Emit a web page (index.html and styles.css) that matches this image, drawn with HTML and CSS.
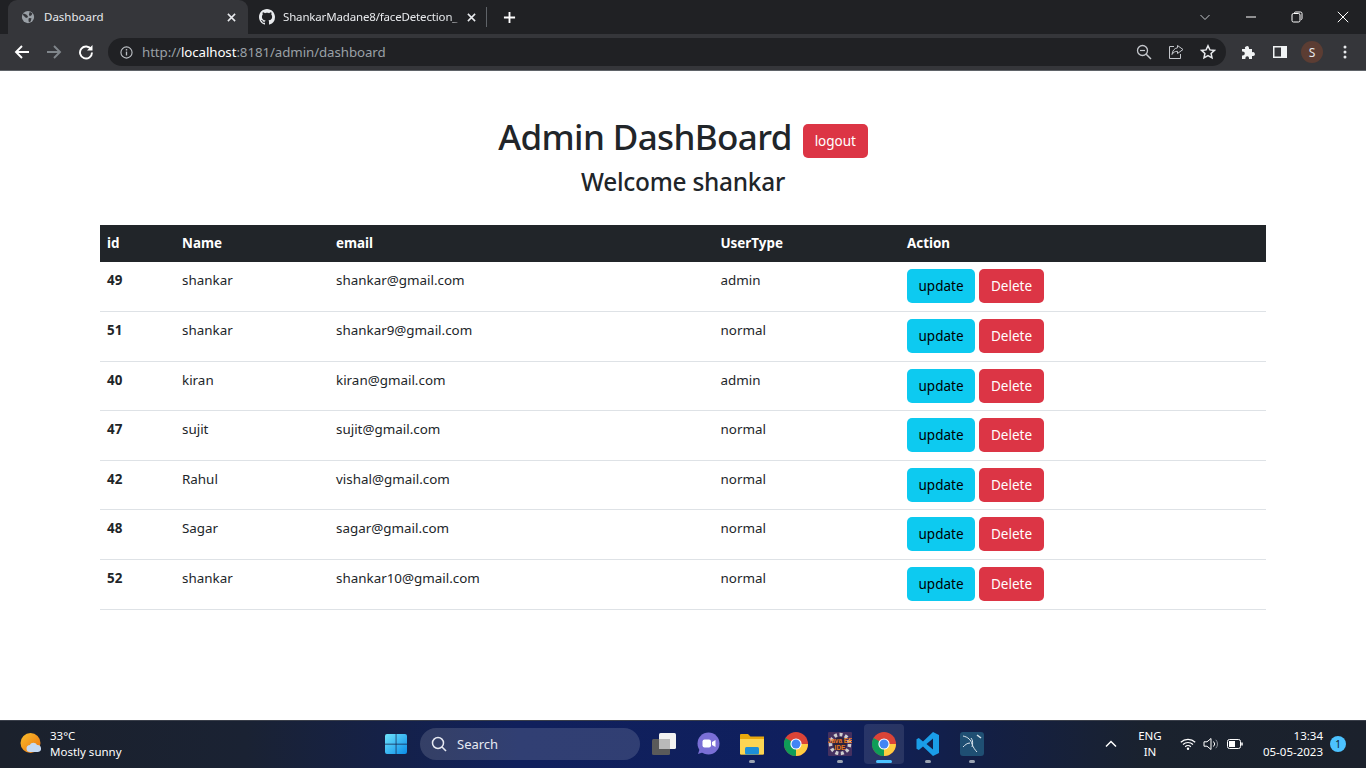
FILE: index.html
```html
<!DOCTYPE html>
<html lang="en">
<head>
<meta charset="utf-8">
<title>Dashboard</title>
<link rel="stylesheet" href="styles.css">
</head>
<body>
<div class="screen">
  <header class="browser">
    <div class="tabstrip">
      <div class="tab tab-active">
        <svg class="favicon" viewBox="0 0 16 16"><circle cx="8" cy="8" r="7" fill="#9aa0a6"/><path d="M3 4l3 1 2 2-1 2-2-.5-3-3zM10 2l3 2-1 2-2 1-1-2zM9 9l3 .5-1 3.5-2 1-.5-3z" fill="#35363a"/></svg>
        <span class="tab-title">Dashboard</span>
        <svg class="tab-close" viewBox="0 0 10 10"><path d="M1 1l8 8M9 1l-8 8" stroke="#e8eaed" stroke-width="1.7"/></svg>
      </div>
      <div class="tab tab-idle">
        <svg class="favicon-gh" viewBox="0 0 16 16"><path fill="#e8eaed" d="M8 0C3.58 0 0 3.58 0 8c0 3.54 2.29 6.53 5.47 7.59.4.07.55-.17.55-.38 0-.19-.01-.82-.01-1.49-2.01.37-2.53-.49-2.69-.94-.09-.23-.48-.94-.82-1.13-.28-.15-.68-.52-.01-.53.63-.01 1.08.58 1.23.82.72 1.21 1.87.87 2.33.66.07-.52.28-.87.51-1.07-1.78-.2-3.64-.89-3.64-3.95 0-.87.31-1.59.82-2.15-.08-.2-.36-1.02.08-2.12 0 0 .67-.21 2.2.82.64-.18 1.32-.27 2-.27s1.36.09 2 .27c1.53-1.04 2.2-.82 2.2-.82.44 1.1.16 1.92.08 2.12.51.56.82 1.27.82 2.15 0 3.07-1.87 3.75-3.65 3.95.29.25.54.73.54 1.48 0 1.07-.01 1.93-.01 2.2 0 .21.15.46.55.38A8.01 8.01 0 0 0 16 8c0-4.42-3.58-8-8-8z"/></svg>
        <span class="tab-title tab-title-clip">ShankarMadane8/faceDetection_</span>
        <svg class="tab-close" viewBox="0 0 10 10"><path d="M1 1l8 8M9 1l-8 8" stroke="#e8eaed" stroke-width="1.7"/></svg>
      </div>
      <span class="tab-sep"></span>
      <svg class="tab-new" viewBox="0 0 14 14"><path d="M7 1v12M1 7h12" stroke="#fff" stroke-width="2"/></svg>
      <div class="win-controls">
        <svg viewBox="0 0 12 12"><path d="M1.5 4l4.5 4.5L10.500 4" fill="none" stroke="#c4c7cc" stroke-width="1"/></svg>
        <svg viewBox="0 0 12 12"><path d="M1 6h10" stroke="#fff" stroke-width="1"/></svg>
        <svg viewBox="0 0 12 12"><path d="M3.500 2.500V2a1 1 0 0 1 1-1h5a1.500 1.500 0 0 1 1.500 1.500v5a1 1 0 0 1-1 1" fill="none" stroke="#fff"/><rect x="1" y="2.500" width="8" height="8.500" rx="1.500" fill="none" stroke="#fff"/></svg>
        <svg viewBox="0 0 12 12"><path d="M.8.8l10.400 10.400M11.200.8L.8 11.200" stroke="#fff" stroke-width="1"/></svg>
      </div>
    </div>
    <div class="toolbar">
      <svg class="nav-icon" viewBox="0 0 16 16"><path d="M15 8H2M8 2L2 8l6 6" fill="none" stroke="#fff" stroke-width="1.900"/></svg>
      <svg class="nav-icon" viewBox="0 0 16 16"><path d="M1 8h13M8 2l6 6-6 6" fill="none" stroke="#80868b" stroke-width="1.900"/></svg>
      <svg class="nav-icon" viewBox="0 0 16 16"><path d="M13.200 5.500A6 6 0 1 0 14 8.500" fill="none" stroke="#fff" stroke-width="1.900"/><path d="M14.500 1v5.500H9z" fill="#fff"/></svg>
      <div class="omnibox">
        <svg class="info" viewBox="0 0 14 14"><circle cx="7" cy="7" r="6" fill="none" stroke="#bdc1c6" stroke-width="1.200"/><path d="M7 6v4.200" stroke="#bdc1c6" stroke-width="1.400"/><circle cx="7" cy="4" r=".9" fill="#bdc1c6"/></svg>
        <span class="url"><span class="url-dim">http://</span><span class="url-host">localhost</span><span class="url-dim">:8181/admin/dashboard</span></span>
        <span class="omni-space"></span>
        <svg class="omni-icon" viewBox="0 0 16 16"><circle cx="6.500" cy="6.500" r="5" fill="none" stroke="#c4c7cc" stroke-width="1.300"/><path d="M10.200 10.200L15 15" stroke="#c4c7cc" stroke-width="1.500"/><path d="M4 6.500h5" stroke="#c4c7cc" stroke-width="1.200"/></svg>
        <svg class="omni-icon" viewBox="0 0 16 16"><path d="M6 2.500H1.500v12h11V10" fill="none" stroke="#c4c7cc" stroke-width="1"/><path d="M9.500 1.500L15 5.500 9.500 9.500V7.300C7 7.300 5.200 8.300 4 10.500 4.300 7 6.300 4.200 9.500 3.800z" fill="none" stroke="#c4c7cc" stroke-width="1"/></svg>
        <svg class="omni-icon" viewBox="0 0 16 16"><path d="M8 1.800l1.900 4.100 4.500.5-3.300 3 .9 4.500L8 11.700l-4 2.200.9-4.500-3.300-3 4.500-.5z" fill="none" stroke="#e8eaed" stroke-width="1.500"/></svg>
      </div>
      <svg class="tool-puzzle" viewBox="0 0 16 16"><path fill="#f1f3f4" d="M1 5h3.200a2 2 0 1 1 3.800-1V5h3v3.200a2 2 0 1 1 1 3.800h-1v3H8v-1a1.800 1.800 0 1 0-3.600 0v1H1v-3.500h.8a2 2 0 1 0 0-4H1z"/></svg>
      <svg class="tool-panel" viewBox="0 0 14 14"><path fill-rule="evenodd" fill="#f1f3f4" d="M0 1h14v12H0zM1.500 2.500v9H8v-9z"/></svg>
      <span class="avatar">S</span>
      <svg class="tool-menu" viewBox="0 0 4 14"><circle cx="2" cy="2" r="1.500" fill="#e8eaed"/><circle cx="2" cy="7" r="1.500" fill="#e8eaed"/><circle cx="2" cy="12" r="1.500" fill="#e8eaed"/></svg>
    </div>
  </header>

  <main class="page">
    <div class="heading">
      <h1>Admin DashBoard</h1>
      <a class="btn btn-danger btn-logout">logout</a>
    </div>
    <h3>Welcome shankar</h3>
    <table class="users">
      <thead>
        <tr><th class="c-id">id</th><th class="c-name">Name</th><th class="c-email">email</th><th class="c-type">UserType</th><th>Action</th></tr>
      </thead>
      <tbody>
        <tr><th>49</th><td>shankar</td><td>shankar@gmail.com</td><td>admin</td><td><a class="btn btn-info">update</a><a class="btn btn-danger">Delete</a></td></tr>
        <tr><th>51</th><td>shankar</td><td>shankar9@gmail.com</td><td>normal</td><td><a class="btn btn-info">update</a><a class="btn btn-danger">Delete</a></td></tr>
        <tr><th>40</th><td>kiran</td><td>kiran@gmail.com</td><td>admin</td><td><a class="btn btn-info">update</a><a class="btn btn-danger">Delete</a></td></tr>
        <tr><th>47</th><td>sujit</td><td>sujit@gmail.com</td><td>normal</td><td><a class="btn btn-info">update</a><a class="btn btn-danger">Delete</a></td></tr>
        <tr><th>42</th><td>Rahul</td><td>vishal@gmail.com</td><td>normal</td><td><a class="btn btn-info">update</a><a class="btn btn-danger">Delete</a></td></tr>
        <tr><th>48</th><td>Sagar</td><td>sagar@gmail.com</td><td>normal</td><td><a class="btn btn-info">update</a><a class="btn btn-danger">Delete</a></td></tr>
        <tr><th>52</th><td>shankar</td><td>shankar10@gmail.com</td><td>normal</td><td><a class="btn btn-info">update</a><a class="btn btn-danger">Delete</a></td></tr>
      </tbody>
    </table>
  </main>

  <footer class="taskbar">
    <div class="weather">
      <svg class="weather-icon" viewBox="0 0 24 24"><defs><linearGradient id="sun" x1="0" y1="0" x2="1" y2="1"><stop offset="0" stop-color="#fbbf2c"/><stop offset="1" stop-color="#e8700f"/></linearGradient></defs><circle cx="10.500" cy="11" r="10" fill="url(#sun)"/><path d="M10 20a3.500 3.500 0 0 1 0-7c.6-2.500 5.500-3.500 7 0a3.500 3.500 0 0 1 1 7z" fill="#c5d9f2"/></svg>
      <div class="weather-text"><span>33°C</span><span>Mostly sunny</span></div>
    </div>
    <div class="slot">
      <svg class="i24" viewBox="0 0 24 24"><defs><linearGradient id="win" x1="0" y1="0" x2="1" y2="1"><stop offset="0" stop-color="#6fe3fb"/><stop offset="1" stop-color="#0a8ce8"/></linearGradient></defs><path fill="url(#win)" d="M3 2h8.700v9.700H1V4a2 2 0 0 1 2-2zM12.400 2H21a2 2 0 0 1 2 2v7.700H12.400zM1 12.400h10.700V22H3a2 2 0 0 1-2-2zM12.400 12.400H23V20a2 2 0 0 1-2 2h-8.600z"/></svg>
    </div>
    <div class="search">
      <svg class="search-icon" viewBox="0 0 16 16"><circle cx="7" cy="7" r="5.500" fill="none" stroke="#e6e9f2" stroke-width="1.500"/><path d="M11 11l4 4" stroke="#e6e9f2" stroke-width="1.600"/></svg>
      <span>Search</span>
    </div>
    <div class="slot">
      <svg class="i24" viewBox="0 0 24 24"><rect x="7" y="1" width="17" height="16" rx="1.500" fill="#f2f2f2"/><rect x="0" y="7" width="18" height="16" rx="1.500" fill="#5a5a5a"/><rect x="7" y="7" width="11" height="10" fill="#b9b9b9"/></svg>
    </div>
    <div class="slot">
      <svg class="i24" viewBox="0 0 24 24"><circle cx="12.500" cy="11.500" r="11" fill="#7a6fd6"/><path d="M2 22l2-6 4 4z" fill="#7a6fd6"/><rect x="6.500" y="7.500" width="8.500" height="8" rx="2" fill="#fff"/><path d="M16 10l3.500-2v7L16 13z" fill="#fff"/></svg>
    </div>
    <div class="slot slot-open">
      <svg class="i24" viewBox="0 0 24 24"><path d="M0 3a1 1 0 0 1 1-1h7l2.500 2.500H24v17a1 1 0 0 1-1 1H1a1 1 0 0 1-1-1z" fill="#e9a80c"/><path d="M0 7h24v14.500a1 1 0 0 1-1 1H1a1 1 0 0 1-1-1z" fill="#fcd553"/><rect x="5" y="15" width="14" height="7.500" rx="1.500" fill="#1d8fd8"/></svg>
    </div>
    <div class="slot">
      <svg class="i24" viewBox="0 0 24 24"><use href="#chrome"/></svg>
    </div>
    <div class="slot slot-open">
      <svg class="i24" viewBox="0 0 24 24"><rect width="24" height="24" rx="1" fill="#453060"/><circle cx="12" cy="12" r="9.500" fill="none" stroke="#cfcfcf" stroke-width="3.500" stroke-dasharray="3 2.500"/><circle cx="12" cy="12" r="7" fill="#2c2340"/><text x="12" y="11" class="java-text">Java EE</text><text x="12" y="18" class="java-text">IDE</text></svg>
    </div>
    <div class="slot slot-current">
      <svg class="i24" viewBox="0 0 24 24"><defs><g id="chrome"><circle cx="12" cy="12" r="12" fill="#db4437"/><path d="M12 12L1.600 6A12 12 0 0 0 12 24l6-10.500z" fill="#0f9d58"/><path d="M12 12h12A12 12 0 0 1 12 24z" fill="#ffcd40"/><circle cx="12" cy="12" r="5.600" fill="#fff"/><circle cx="12" cy="12" r="4.500" fill="#4285f4"/></g></defs><use href="#chrome"/></svg>
    </div>
    <div class="slot slot-open">
      <svg class="i24" viewBox="0 0 24 24"><path d="M17 0l6 3v18l-6 3L7 14.500 2.800 18 .5 16.800V7.200L2.800 6 7 9.500zM17 6.500L10.500 12l6.500 5.500z" fill="#1a9de8" fill-rule="evenodd"/></svg>
    </div>
    <div class="slot slot-open">
      <svg class="i24" viewBox="0 0 24 24"><rect width="24" height="24" rx="3" fill="#1f4f73"/><path d="M3 4c5 1 8 4 9 8 1 3 3 6 5 8M11 6c2 2 2 6 1 9M3 15c2-2 4-4 7-4" fill="none" stroke="#dbe6ee" stroke-width="1"/><path d="M17 3l4 3" stroke="#dbe6ee" stroke-width="1.500"/></svg>
    </div>
    <div class="tray">
      <svg class="tray-up" viewBox="0 0 12 8"><path d="M1 6.500L6 1.500l5 5" fill="none" stroke="#fff" stroke-width="1.500"/></svg>
      <div class="lang"><span>ENG</span><span>IN</span></div>
      <svg class="tray-wifi" viewBox="0 0 16 12"><path d="M.8 4.200a10.500 10.500 0 0 1 14.400 0M3 6.500a7.300 7.300 0 0 1 10 0M5.200 8.700a4 4 0 0 1 5.600 0" fill="none" stroke="#fff" stroke-width="1.200"/><circle cx="8" cy="10.700" r="1.200" fill="#fff"/></svg>
      <svg class="tray-vol" viewBox="0 0 16 14"><path d="M1 4.800h3L8 1.500v11l-4-3.300H1z" fill="none" stroke="#fff" stroke-width="1"/><path d="M10.500 4.500a3.500 3.500 0 0 1 0 5" fill="none" stroke="#fff"/><path d="M12.800 2.800a6 6 0 0 1 0 8.400" fill="none" stroke="#8a8f98"/></svg>
      <svg class="tray-bat" viewBox="0 0 16 10"><rect x=".5" y=".5" width="13" height="9" rx="2" fill="none" stroke="#fff"/><rect x="2" y="2" width="6" height="6" fill="#fff"/><path d="M15 3.500v3" stroke="#fff" stroke-width="1.500"/></svg>
      <div class="clock"><span>13:34</span><span>05-05-2023</span></div>
      <span class="badge">1</span>
    </div>
  </footer>
</div>
</body>
</html>
```

FILE: styles.css
```css
* { box-sizing: border-box; }
html, body { margin: 0; padding: 0; height: 100%; overflow: hidden; }
body { font-family: "Noto Sans", "Open Sans", sans-serif; color: #212529; background: #fff; }
.screen { display: flex; flex-direction: column; width: 1366px; height: 768px; }

/* browser chrome */
.browser { flex: none; height: 71px; background: #202124; border-bottom: 1px solid #5f6368; }
.tabstrip { display: flex; align-items: center; height: 34px; padding: 0 0 0 8px; color: #e8eaed; font-size: 11.500px; }
.tab { display: flex; align-items: center; height: 34px; }
.tab-active { width: 240px; padding: 0 12px 0 13px; background: #35363a; border-radius: 9px 9px 0 0; }
.tab-idle { width: 233px; padding: 0 5px 0 11px; }
.favicon { width: 14px; height: 14px; flex: none; margin-right: 9px; }
.favicon-gh { width: 16px; height: 16px; flex: none; margin-right: 8px; }
.tab-title { flex: 1; white-space: nowrap; overflow: hidden; padding-bottom: 1px; }
.tab-title-clip { margin-right: 7px; letter-spacing: -.16px; -webkit-mask-image: linear-gradient(90deg, #000 94%, rgba(0, 0, 0, .3)); mask-image: linear-gradient(90deg, #000 94%, rgba(0, 0, 0, .3)); }
.tab-close { width: 9px; height: 9px; flex: none; }
.tab-sep { width: 1px; height: 20px; background: #5f6368; margin-left: 5px; }
.tab-new { width: 13px; height: 13px; margin-left: 16px; }
.win-controls { display: flex; margin-left: auto; margin-right: 17px; gap: 34px; }
.win-controls svg { width: 12px; height: 12px; display: block; }

.toolbar { display: flex; align-items: center; height: 36px; background: #35363a; padding-left: 14px; }
.nav-icon { width: 16px; height: 16px; flex: none; margin-right: 16px; }
.omnibox { display: flex; align-items: center; width: 1118px; height: 28px; margin-left: -2px; padding: 0 10px 0 12px; border-radius: 14px; background: #202124; }
.info { width: 13px; height: 13px; flex: none; margin-right: 9px; }
.url { font-size: 13.300px; white-space: nowrap; letter-spacing: -.08px; }
.url-dim { color: #9aa0a6; }
.url-host { color: #fff; }
.omni-space { flex: 1; }
.omni-icon { width: 16px; height: 16px; flex: none; margin-left: 16px; }
.tool-puzzle { width: 16px; height: 16px; flex: none; margin-left: 15px; }
.tool-panel { width: 14px; height: 14px; flex: none; margin-left: 16px; }
.avatar { display: flex; align-items: center; justify-content: center; flex: none; width: 22px; height: 22px; margin-left: 14px; border-radius: 50%; background: #5c3d33; color: #e8eaed; font-size: 12px; }
.tool-menu { width: 4px; height: 14px; flex: none; margin-left: 20px; }

/* page */
.page { flex: 1; min-height: 0; padding: 0 100px; background: #fff; }
.heading { display: flex; align-items: center; justify-content: center; margin-top: 43px; height: 48px; }
h1 { margin: 0 11px 2px 0; font-size: 35px; font-weight: 500; line-height: 46px; letter-spacing: -.62px; }
h3 { margin: 5px 0 0; text-align: center; font-size: 24.400px; font-weight: 500; line-height: 30px; letter-spacing: -.25px; }
.btn { display: inline-flex; align-items: center; justify-content: center; height: 34px; padding: 0 12px; border-radius: 5px; font-size: 13.500px; }
.btn-danger { background: #dc3545; color: #fff; }
.btn-info { background: #0dcaf0; color: #000; margin-right: 4px; width: 68px; }
.btn-logout { margin-top: 5px; width: 65px; }

.users { width: 1166px; margin-top: 28px; border-collapse: collapse; table-layout: fixed; font-size: 13.400px; }
.users thead tr { height: 37px; background: #212529; color: #fff; }
.users th, .users td { padding: 0 7px; text-align: left; vertical-align: top; }
.users thead th { vertical-align: middle; padding-bottom: 2px; font-weight: 700; }
.users tbody tr { height: 49.600px; border-bottom: 1px solid #dee2e6; }
.users tbody th, .users tbody td { padding-top: 8px; line-height: 20px; }
.users tbody td:last-child { padding-top: 7px; }
.users .btn-danger { width: 65px; }
.c-id { width: 75px; }
.c-name { width: 154px; }
.c-email { width: 384.500px; }
.c-type { width: 186.500px; }

/* taskbar */
.taskbar { flex: none; display: flex; align-items: center; height: 48px; padding-bottom: 1px; border-top: 1px solid #3a3f4a; background: linear-gradient(90deg, #1b212c 0%, #1a2233 18%, #10205c 38%, #0f1f5e 60%, #131f45 72%, #1a222e 84%, #1b212c 100%); color: #fff; }
.weather { display: flex; align-items: center; width: 374px; padding-left: 20px; flex: none; }
.weather-icon { width: 24px; height: 24px; margin-right: 6px; }
.weather-text { display: flex; flex-direction: column; margin-top: -1px; font-size: 11.500px; line-height: 16px; }
.slot { position: relative; display: flex; align-items: center; justify-content: center; flex: none; width: 44px; height: 40px; border-radius: 4px; }
.i24 { width: 24px; height: 24px; }
.slot-open::after { content: ""; position: absolute; left: 19px; bottom: 1px; width: 6px; height: 3px; border-radius: 2px; background: #9aa3b2; }
.slot-current { width: 40px; margin: 0 2px; background: rgba(255, 255, 255, .1); }
.slot-current::after { content: ""; position: absolute; left: 12px; bottom: 1px; width: 16px; height: 3px; border-radius: 2px; background: #4cc2ff; }
.search { display: flex; align-items: center; flex: none; width: 220px; height: 32px; margin: 0 2px; padding-left: 11px; border-radius: 16px; background: rgba(255, 255, 255, .14); font-size: 13px; color: #e6e9f2; }
.search-icon { width: 16px; height: 16px; margin-right: 10px; }
.java-text { font-family: "Liberation Sans", sans-serif; font-size: 6.500px; font-weight: 700; fill: #ec7a1c; text-anchor: middle; }
.tray { display: flex; align-items: center; margin-left: auto; padding-right: 20px; }
.tray-up { width: 12px; height: 8px; margin-right: 18px; }
.lang { display: flex; flex-direction: column; align-items: center; width: 30px; font-size: 11.500px; line-height: 16px; margin-right: 15px; }
.tray-wifi { width: 16px; height: 12px; margin-right: 7px; }
.tray-vol { width: 16px; height: 14px; margin-right: 8px; }
.tray-bat { width: 16px; height: 10px; margin-right: 20px; }
.clock { display: flex; flex-direction: column; align-items: flex-end; font-size: 11.500px; line-height: 16px; margin-right: 7px; }
.badge { display: flex; align-items: center; justify-content: center; width: 16px; height: 16px; border-radius: 50%; background: #4cc2ff; color: #0b1a2a; font-size: 10px; }
```
